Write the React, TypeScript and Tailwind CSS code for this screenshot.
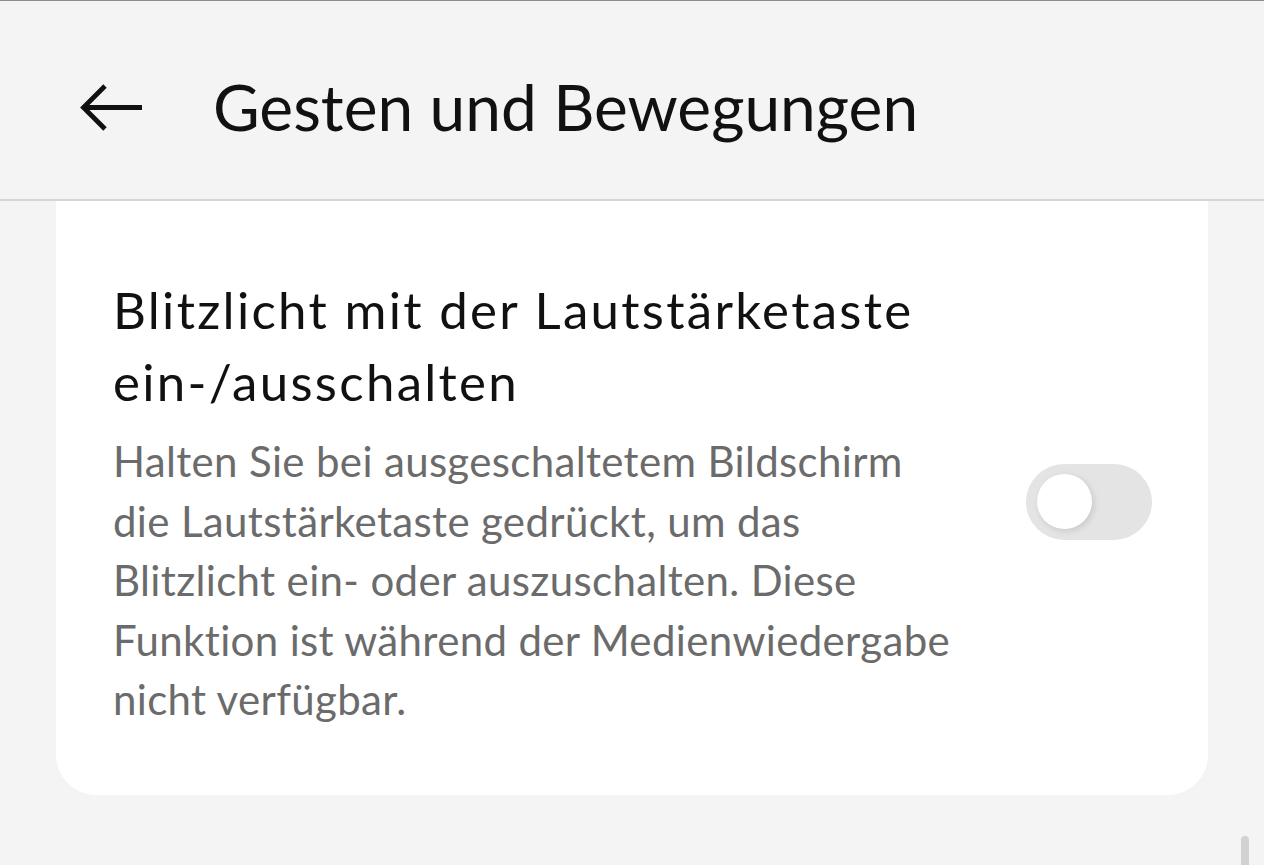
const descLines = [
  "Halten Sie bei ausgeschaltetem Bildschirm",
  "die Lautstärketaste gedrückt, um das",
  "Blitzlicht ein- oder auszuschalten. Diese",
  "Funktion ist während der Medienwiedergabe",
  "nicht verfügbar.",
];

function BackArrow() {
  return (
    <svg width="64" height="50" viewBox="0 0 64 50" fill="none" stroke="#111" strokeWidth="4.8" strokeLinecap="butt" strokeLinejoin="miter">
      <path d="M4 25.5H62" />
      <path d="M25 4L3.5 25.5L25 47" />
    </svg>
  );
}

function Toggle() {
  return (
    <div className="w-[126px] h-[76px] rounded-full bg-[#e4e4e4] flex items-center px-[11px] shrink-0">
      <div className="w-[55px] h-[55px] rounded-full bg-white shadow-[2px_2px_6px_rgba(0,0,0,0.12)]" />
    </div>
  );
}

export default function App() {
  return (
    <div className="relative w-[1264px] h-[865px] overflow-hidden bg-[#f4f4f4] font-['Lato',sans-serif] text-[#111]">
      <header className="h-[201px] border-t border-[#8c8c8c] border-b-2 border-b-[#d6d6d6] flex items-center pt-[14px]">
        <div className="ml-[80px]">
          <BackArrow />
        </div>
        <h1 className="ml-[69px] text-[64px] leading-none">Gesten und Bewegungen</h1>
      </header>

      <section className="mx-[56px] bg-white rounded-b-[40px] pl-[57px] pr-[56px] pt-[73px] pb-[65px] flex items-center gap-[40px]">
        <div className="flex-1">
          <h2 className="text-[51px] leading-[72px] tracking-[2.3px]">
            Blitzlicht mit der Lautstärketaste
            <br />
            ein-/ausschalten
          </h2>
          <p className="mt-[14px] text-[42px] leading-[59.5px] text-[#6b6b6b] tracking-[0.35px]">
            {descLines.map((l) => (
              <span key={l} className="block whitespace-nowrap">
                {l}
              </span>
            ))}
          </p>
        </div>
        <Toggle />
      </section>

      <div className="absolute left-[1241px] top-[836px] w-[8px] h-[40px] rounded-full bg-[#d2d2d2]" />
    </div>
  );
}
